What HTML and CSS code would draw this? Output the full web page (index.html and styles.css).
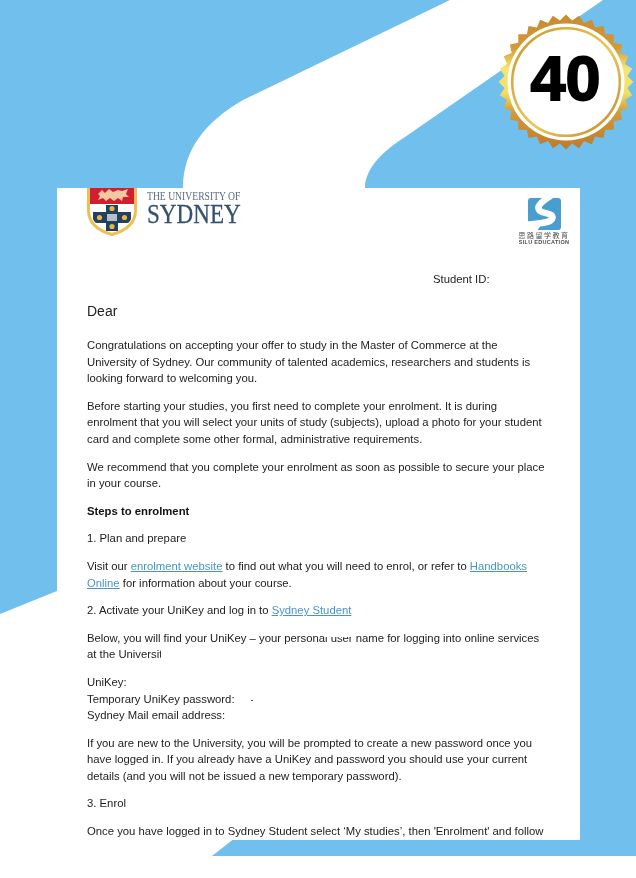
FILE: index.html
```html
<!DOCTYPE html>
<html lang="en">
<head>
<meta charset="utf-8">
<title>University of Sydney enrolment letter</title>
<link rel="stylesheet" href="styles.css">
</head>
<body>
<main class="stage">
  <svg class="backdrop" viewBox="0 0 636 878" aria-hidden="true">
    <path class="blue" d="M0 0H450L243 100C205 122 183 150 183 188V200H57V591L0 614Z"/>
    <path class="blue" d="M603 0H636V856H212L235 838H400V188H365C365 170 380 153 405 137Z"/>
  </svg>

  <svg class="medal" viewBox="0 0 136 136" role="img" aria-label="40">
    <defs>
      <linearGradient id="gold" x1="0" y1="0" x2="0" y2="1">
        <stop offset="0" stop-color="#c98a30"/>
        <stop offset=".25" stop-color="#d39a35"/>
        <stop offset=".4" stop-color="#f5e673"/>
        <stop offset=".58" stop-color="#f3df66"/>
        <stop offset=".72" stop-color="#d39a35"/>
        <stop offset="1" stop-color="#bd7a2b"/>
      </linearGradient>
      <linearGradient id="ring" x1="0" y1="0" x2="1" y2="1">
        <stop offset="0" stop-color="#c9952c"/>
        <stop offset=".55" stop-color="#e9c95a"/>
        <stop offset="1" stop-color="#bf8a2a"/>
      </linearGradient>
      <clipPath id="burst">
        <rect x="20.3" y="20.3" width="95.4" height="95.4"/>
        <rect x="20.3" y="20.3" width="95.4" height="95.4" transform="rotate(11.25 68 68)"/>
        <rect x="20.3" y="20.3" width="95.4" height="95.4" transform="rotate(22.5 68 68)"/>
        <rect x="20.3" y="20.3" width="95.4" height="95.4" transform="rotate(33.75 68 68)"/>
        <rect x="20.3" y="20.3" width="95.4" height="95.4" transform="rotate(45 68 68)"/>
        <rect x="20.3" y="20.3" width="95.4" height="95.4" transform="rotate(56.25 68 68)"/>
        <rect x="20.3" y="20.3" width="95.4" height="95.4" transform="rotate(67.5 68 68)"/>
        <rect x="20.3" y="20.3" width="95.4" height="95.4" transform="rotate(78.75 68 68)"/>
      </clipPath>
    </defs>
    <rect class="burst-fill" width="136" height="136" clip-path="url(#burst)"/>
    <circle class="disc" cx="68" cy="68" r="58.5"/>
    <circle class="ring" cx="68" cy="68" r="53.8"/>
    <text class="medal-num" x="67.500" y="85.500" text-anchor="middle">40</text>
  </svg>

  <article class="letter">
    <header class="brand">
      <div class="usyd">
        <svg class="crest" viewBox="0 0 50 48" aria-hidden="true">
          <path d="M1.500 -2H48.500V22C48.500 36 38 43 25 46.500C12 43 1.500 36 1.500 22Z" fill="#fff" stroke="#eebf55" stroke-width="3"/>
          <path d="M3 -2H47V16H3Z" fill="#d21f30"/>
          <path d="M11 6L15 2L18 5L22 1L26 4L31 2L35 3L41 1L39 6L42 9L36 9L35 13L31 10L27 13L23 10L19 13L16 10L11 12L13 8Z" fill="#f2c7a2"/>
          <path d="M6 24H19V17H31V24H44V31C43 33 42 35 40 35H31V43H19V35H10C8 35 7 33 6 31Z" fill="#22405f"/>
          <rect x="20" y="26" width="10" height="7" fill="#b7c0c8"/>
          <circle cx="12.500" cy="29.500" r="2.600" fill="#e7b64b"/>
          <circle cx="37.500" cy="29.500" r="2.600" fill="#e7b64b"/>
          <circle cx="25" cy="20.500" r="2.600" fill="#e7b64b"/>
          <circle cx="25" cy="38.500" r="2.600" fill="#e7b64b"/>
        </svg>
        <div class="wordmark">
          <span class="wm-top">THE UNIVERSITY OF</span>
          <span class="wm-main">SYDNEY</span>
        </div>
      </div>
      <div class="silu">
        <svg class="silu-mark" viewBox="0 0 33 32" aria-hidden="true">
          <rect width="33" height="32" rx="3" fill="#4a9dcf"/>
          <path d="M0 25L13 27L9 33H0Z" fill="#fff"/>
          <path d="M24 -3C15 3 7 8 12 13C16 16 27 15 24 21C21 26 8 25 -2 27" fill="none" stroke="#fff" stroke-width="6.500"/>
        </svg>
        <span class="silu-cn">思路留学教育</span>
        <span class="silu-en">SILU EDUCATION</span>
      </div>
    </header>

    <p class="student-id">Student ID:</p>
    <p class="dear">Dear</p>

    <p>Congratulations on accepting your offer to study in the Master of Commerce at the<br>University of Sydney. Our community of talented academics, researchers and students is<br>looking forward to welcoming you.</p>
    <p>Before starting your studies, you first need to complete your enrolment. It is during<br>enrolment that you will select your units of study (subjects), upload a photo for your student<br>card and complete some other formal, administrative requirements.</p>
    <p>We recommend that you complete your enrolment as soon as possible to secure your place<br>in your course.</p>
    <p class="strong">Steps to enrolment</p>
    <p>1. Plan and prepare</p>
    <p>Visit our <a href="#">enrolment website</a> to find out what you will need to enrol, or refer to <a href="#">Handbooks<br>Online</a> for information about your course.</p>
    <p>2. Activate your UniKey and log in to <a href="#">Sydney Student</a></p>
    <p>Below, you will find your UniKey – your persona<span class="veil veil-top">l user</span> name for logging into online services<br>at the Universi<span class="veil veil-low">ty</span></p>
    <p>UniKey:<br>Temporary UniKey password:<span class="speck"></span><br>Sydney Mail email address:</p>
    <p>If you are new to the University, you will be prompted to create a new password once you<br>have logged in. If you already have a UniKey and password you should use your current<br>details (and you will not be issued a new temporary password).</p>
    <p>3. Enrol</p>
    <p>Once you have logged in to Sydney Student select ‘My studies’, then 'Enrolment' and follow</p>
  </article>
</main>
</body>
</html>
```

FILE: styles.css
```css
html, body {
  margin: 0;
  padding: 0;
  background: #fff;
}

.stage {
  position: relative;
  width: 636px;
  height: 878px;
  overflow: hidden;
  padding: 188px 0 0 57px;
  box-sizing: border-box;
}

.backdrop {
  position: absolute;
  inset: 0;
  width: 636px;
  height: 878px;
}

.blue {
  fill: #70bfec;
}

.medal {
  position: absolute;
  left: 497.5px;
  top: 13.5px;
  width: 136px;
  height: 136px;
}

.burst-fill {
  fill: url(#gold);
}

.disc {
  fill: #fff;
}

.ring {
  fill: none;
  stroke: url(#ring);
  stroke-width: 2.6;
}

.medal-num {
  font-family: "Liberation Sans", Arial, sans-serif;
  font-weight: 700;
  font-size: 63px;
  fill: #000;
  stroke: #000;
  stroke-width: 1.8;
}

.letter {
  position: relative;
  width: 523px;
  height: 652px;
  overflow: hidden;
  background: #fff;
  box-sizing: border-box;
  padding: 0 10px 0 30px;
  font-family: "Liberation Sans", Arial, sans-serif;
  font-size: 11.3px;
  line-height: 16.6px;
  color: #222;
  filter: blur(0.4px);
}

.letter p {
  margin: 0 0 11px;
  white-space: nowrap;
}

.letter a {
  color: #4a93c8;
  text-decoration: underline;
}

.letter .strong {
  font-weight: 700;
  color: #111;
}

.veil {
  position: relative;
}

.veil::after {
  content: "";
  position: absolute;
  left: 0;
  right: 0;
  background: #fff;
}

.veil-top::after {
  top: 0;
  height: 5px;
}

.veil-low::after {
  bottom: 0;
  left: 2px;
  height: 10px;
}

.speck {
  display: inline-block;
  width: 2px;
  height: 1px;
  margin-left: 16px;
  vertical-align: 2px;
  background: #555;
}

.brand {
  display: flex;
  justify-content: space-between;
  height: 62px;
}

.usyd {
  display: flex;
  align-items: flex-start;
  gap: 10px;
}

.crest {
  display: block;
  width: 50px;
  height: 48px;
}

.wordmark {
  display: flex;
  flex-direction: column;
  padding-top: 3px;
  font-family: "Liberation Serif", "Times New Roman", serif;
  color: #34506f;
  transform: scaleX(0.825);
  transform-origin: left top;
}

.wm-top {
  font-size: 11.7px;
  line-height: 12px;
  color: #566b84;
  white-space: nowrap;
}

.wm-main {
  font-size: 28px;
  line-height: 21px;
  letter-spacing: 0;
  -webkit-text-stroke: 0.3px #34506f;
}

.silu {
  display: flex;
  flex-direction: column;
  align-items: center;
  width: 52px;
  padding-top: 10px;
  color: #4c4c4c;
}

.silu-mark {
  display: block;
  width: 33px;
  height: 32px;
}

.silu-cn {
  margin-top: 2px;
  font-family: "Noto Sans CJK SC", sans-serif;
  font-size: 7px;
  line-height: 7px;
  letter-spacing: 1.5px;
  white-space: nowrap;
}

.silu-en {
  font-family: "Liberation Sans", Arial, sans-serif;
  font-size: 5.500px;
  font-weight: 700;
  line-height: 7px;
  letter-spacing: 0.3px;
  white-space: nowrap;
}

.letter .student-id {
  margin: 21px 0 0 346px;
  line-height: 16px;
}

.letter .dear {
  margin: 15px 0 17px;
  font-size: 14px;
  line-height: 18px;
}
```
